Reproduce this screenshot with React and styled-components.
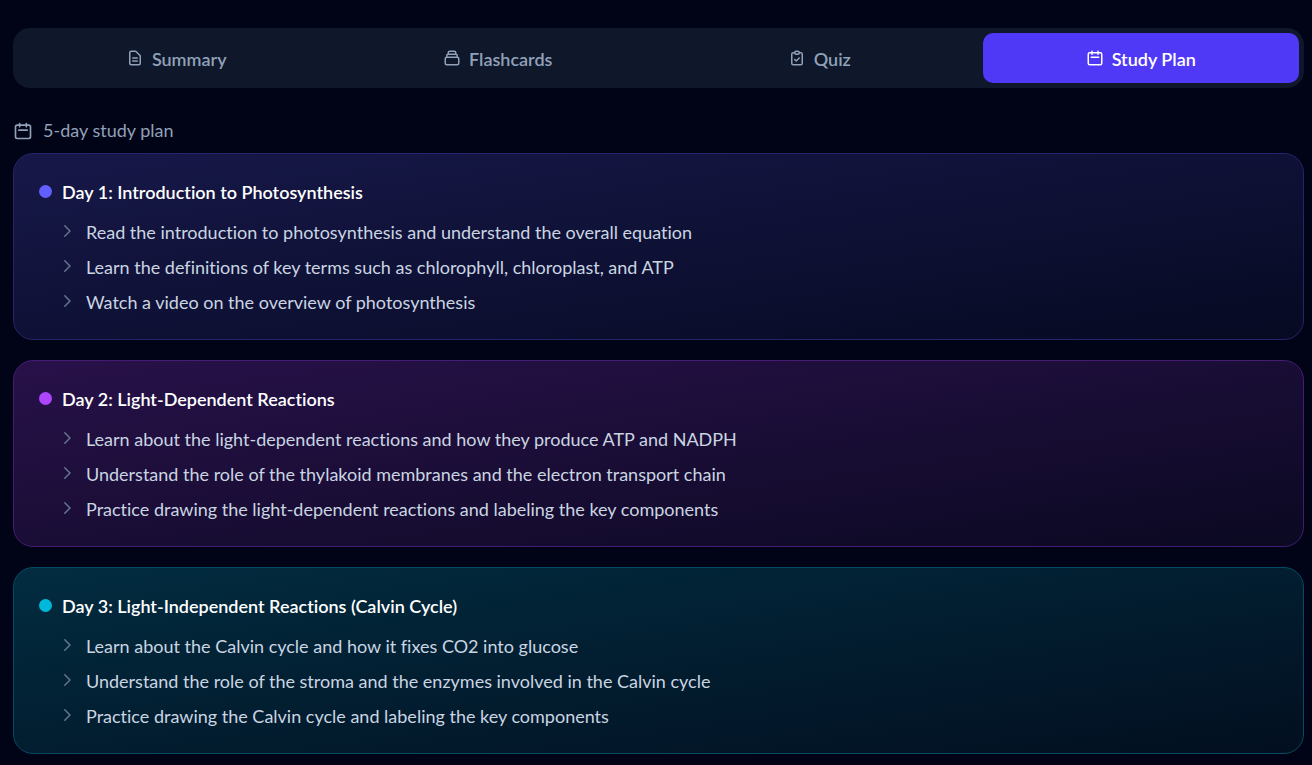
import React, { useState } from 'react';
import styled, { createGlobalStyle } from 'styled-components';

const GlobalStyle = createGlobalStyle`
  * {
    box-sizing: border-box;
  }

  body {
    margin: 0;
    background: #010416;
    color: #cad5e2;
    font-family: Lato, 'Open Sans', sans-serif;
    font-size: 18px;
    font-variant-ligatures: none;
    line-height: 25px;
  }
`;

const Page = styled.main`
  padding: 28px 8px 11px 13px;
`;

const TabBar = styled.nav`
  display: flex;
  gap: 5px;
  padding: 5px;
  border-radius: 17px;
  background: #0f172a;
`;

const Tab = styled.button`
  display: flex;
  flex: 1;
  align-items: center;
  justify-content: center;
  gap: 8px;
  height: 50px;
  padding: 2px 0 0;
  border: 0;
  border-radius: 10px;
  background: ${({ $active }) => ($active ? '#4f39f6' : 'transparent')};
  color: ${({ $active }) => ($active ? '#ffffff' : '#90a1b9')};
  font: inherit;
  font-weight: 600;
  cursor: pointer;

  svg {
    margin-bottom: 3px;
  }
`;

const PlanHeader = styled.header`
  display: flex;
  align-items: center;
  gap: 10px;
  margin-top: 30px;
  color: #90a1b9;
`;

const Days = styled.div`
  display: flex;
  flex-direction: column;
  gap: 20px;
  margin-top: 10px;
`;

const DayCard = styled.section`
  padding: 26px 25px 24px;
  border: 1px solid ${({ $tone }) => $tone.border};
  border-radius: 20px;
  background: linear-gradient(to bottom right, ${({ $tone }) => `${$tone.from}, ${$tone.to}`});
`;

const DayTitle = styled.h2`
  display: flex;
  align-items: center;
  gap: 10px;
  margin: 0 0 15px;
  color: #ffffff;
  font-size: 18px;
  font-weight: 600;
`;

const Dot = styled.span`
  width: 13px;
  height: 13px;
  margin-bottom: 2px;
  border-radius: 50%;
  background: ${({ $color }) => $color};
`;

const TaskList = styled.ul`
  display: flex;
  flex-direction: column;
  gap: 10px;
  margin: 0;
  padding: 0 0 0 19px;
  list-style: none;
`;

const Task = styled.li`
  display: flex;
  align-items: center;
  gap: 10px;

  svg {
    margin-bottom: 3px;
    color: #62748e;
  }
`;

const IconSvg = styled.svg`
  flex: none;
  fill: none;
  stroke: currentColor;
  stroke-linecap: round;
  stroke-linejoin: round;
`;

const icons = {
  document: 'M9 12h6m-6 4h6m2 5H7a2 2 0 01-2-2V5a2 2 0 012-2h5.586a1 1 0 01.707.293l5.414 5.414a1 1 0 01.293.707V19a2 2 0 01-2 2z',
  collection: 'M19 11H5m14 0a2 2 0 012 2v6a2 2 0 01-2 2H5a2 2 0 01-2-2v-6a2 2 0 012-2m14 0V9a2 2 0 00-2-2M5 11V9a2 2 0 012-2m0 0V5a2 2 0 012-2h6a2 2 0 012 2v2M7 7h10',
  clipboard: 'M9 5H7a2 2 0 00-2 2v12a2 2 0 002 2h10a2 2 0 002-2V7a2 2 0 00-2-2h-2M9 5a2 2 0 002 2h2a2 2 0 002-2M9 5a2 2 0 012-2h2a2 2 0 012 2m-6 9l2 2 4-4',
  calendar: 'M8 7V3m8 4V3m-9 8h10M5 21h14a2 2 0 002-2V7a2 2 0 00-2-2H5a2 2 0 00-2 2v12a2 2 0 002 2z',
  chevron: 'M9 5l7 7-7 7',
};

const Icon = ({ name, size }) => (
  <IconSvg width={size} height={size} viewBox="0 0 24 24" strokeWidth="2" aria-hidden="true">
    <path d={icons[name]} />
  </IconSvg>
);

const tabs = [
  { label: 'Summary', icon: 'document' },
  { label: 'Flashcards', icon: 'collection' },
  { label: 'Quiz', icon: 'clipboard' },
  { label: 'Study Plan', icon: 'calendar' },
];

const tones = {
  indigo: { dot: '#615fff', border: '#26246a', from: '#171849', to: '#060a22' },
  purple: { dot: '#ad46ff', border: '#451c73', from: '#281149', to: '#0b0922' },
  cyan: { dot: '#00b8db', border: '#034b60', from: '#022c40', to: '#020f20' },
};

const days = [
  {
    title: 'Day 1: Introduction to Photosynthesis',
    tone: tones.indigo,
    tasks: [
      'Read the introduction to photosynthesis and understand the overall equation',
      'Learn the definitions of key terms such as chlorophyll, chloroplast, and ATP',
      'Watch a video on the overview of photosynthesis',
    ],
  },
  {
    title: 'Day 2: Light-Dependent Reactions',
    tone: tones.purple,
    tasks: [
      'Learn about the light-dependent reactions and how they produce ATP and NADPH',
      'Understand the role of the thylakoid membranes and the electron transport chain',
      'Practice drawing the light-dependent reactions and labeling the key components',
    ],
  },
  {
    title: 'Day 3: Light-Independent Reactions (Calvin Cycle)',
    tone: tones.cyan,
    tasks: [
      'Learn about the Calvin cycle and how it fixes CO2 into glucose',
      'Understand the role of the stroma and the enzymes involved in the Calvin cycle',
      'Practice drawing the Calvin cycle and labeling the key components',
    ],
  },
];

const App = () => {
  const [active, setActive] = useState('Study Plan');
  return (
    <>
      <GlobalStyle />
      <Page>
        <TabBar>
          {tabs.map(({ label, icon }) => (
            <Tab key={label} type="button" $active={label === active} onClick={() => setActive(label)}>
              <Icon name={icon} size={18} />
              {label}
            </Tab>
          ))}
        </TabBar>
        <PlanHeader>
          <Icon name="calendar" size={20} />
          <span>5-day study plan</span>
        </PlanHeader>
        <Days>
          {days.map(({ title, tone, tasks }) => (
            <DayCard key={title} $tone={tone}>
              <DayTitle>
                <Dot $color={tone.dot} />
                {title}
              </DayTitle>
              <TaskList>
                {tasks.map((task) => (
                  <Task key={task}>
                    <Icon name="chevron" size={18} />
                    <span>{task}</span>
                  </Task>
                ))}
              </TaskList>
            </DayCard>
          ))}
        </Days>
      </Page>
    </>
  );
};

export default App;
